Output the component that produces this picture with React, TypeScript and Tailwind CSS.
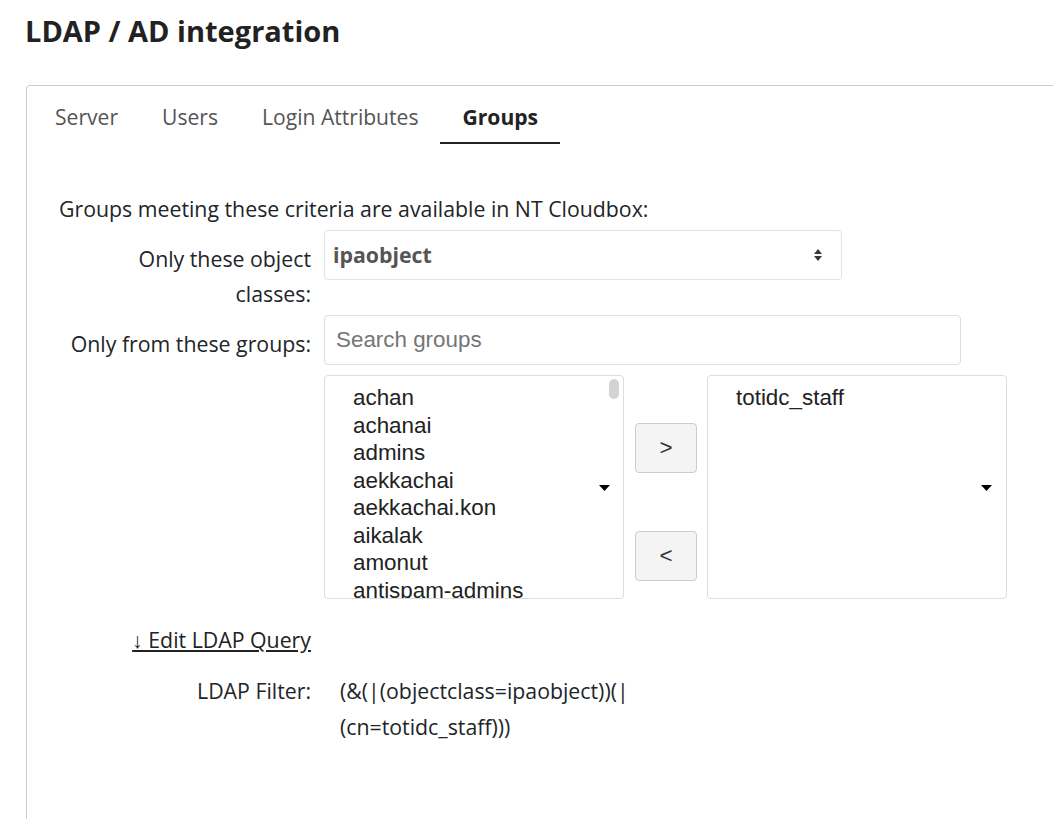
import React from 'react';

const groups = [
  'achan',
  'achanai',
  'admins',
  'aekkachai',
  'aekkachai.kon',
  'aikalak',
  'amonut',
  'antispam-admins',
];

const tabs = ['Server', 'Users', 'Login Attributes', 'Groups'];

const Triangle = () => (
  <svg width="11" height="6" viewBox="0 0 11 6" className="absolute top-[109px]">
    <polygon points="0,0 11,0 5.5,6" fill="#000" />
  </svg>
);

const App = () => {
  return (
    <div className="w-[1053px] h-[819px] overflow-hidden bg-white font-['Open_Sans',sans-serif] text-[#212529]">
      <h1 className="pl-[25px] pt-[13px] text-[29px] font-bold leading-[35px] text-[#222]">
        LDAP / AD integration
      </h1>

      <div className="mt-[37px] ml-[26px] w-[1100px] h-[760px] border border-[#ccc] rounded-[4px] pt-[6px]">
        {/* Tabs */}
        <div className="flex pl-[6px]">
          {tabs.map(tab => (
            <div
              key={tab}
              className={
                tab === 'Groups'
                  ? 'px-[22px] py-[8px] leading-[34px] text-[21.1px] font-bold text-[#222] border-b-2 border-[#222]'
                  : 'px-[22px] py-[8px] leading-[34px] text-[21.1px] text-[#555] border-b-2 border-transparent'
              }
            >
              {tab}
            </div>
          ))}
        </div>

        <div className="pl-[32px] text-[21.3px]">
          <p className="mt-[47px] leading-[36px]">Groups meeting these criteria are available in NT Cloudbox:</p>

          {/* Object classes */}
          <div className="flex items-start mt-[3px]">
            <div className="w-[252px] text-right pt-[11px] leading-[35px]">
              Only these object
              <br />
              classes:
            </div>
            <div className="ml-[13px] w-[518px] h-[50px] border border-[#e3e3e3] rounded-[4px] flex items-center justify-between pl-[8px] pr-[19px]">
              <span className="font-bold text-[#555]">ipaobject</span>
              <svg width="8" height="12" viewBox="0 0 8 12">
                <polygon points="0,5 4,0 8,5" fill="#343a40" />
                <polygon points="0,7 8,7 4,12" fill="#343a40" />
              </svg>
            </div>
          </div>

          {/* Search */}
          <div className="flex items-start mt-[4px]">
            <div className="w-[252px] text-right pt-[11px] leading-[35px]">Only from these groups:</div>
            <div className="ml-[13px] w-[637px] h-[50px] border border-[#ddd] rounded-[4px] flex items-center pl-[11px] font-['Liberation_Sans',Arial,sans-serif] text-[22.4px] text-[#757575]">
              Search groups
            </div>
          </div>

          {/* Dual list */}
          <div className="flex mt-[10px] font-['Liberation_Sans',Arial,sans-serif] text-[22.4px] text-[#222]">
            <div className="w-[265px]" />
            <div className="relative w-[300px] h-[224px] border border-[#ddd] rounded-[4px] overflow-hidden pt-[8px] pl-[28px]">
              {groups.map(g => (
                <div key={g} className="leading-[27.5px]">{g}</div>
              ))}
              <div className="absolute right-[4px] top-[3px] w-[10px] h-[20px] rounded-full bg-[#d3d3d3]" />
              <div className="absolute right-[24px] top-0">
                <Triangle />
              </div>
            </div>
            <div className="ml-[11px] w-[62px] flex flex-col pt-[48px] gap-[58px]">
              <button className="h-[50px] border border-[#ccc] rounded-[4px] bg-[#f4f4f4] text-[#333]">&gt;</button>
              <button className="h-[50px] border border-[#ccc] rounded-[4px] bg-[#f4f4f4] text-[#333]">&lt;</button>
            </div>
            <div className="relative ml-[10px] w-[300px] h-[224px] border border-[#ddd] rounded-[4px] overflow-hidden pt-[8px] pl-[28px]">
              <div className="leading-[27.5px]">totidc_staff</div>
              <div className="absolute right-[25px] top-0">
                <Triangle />
              </div>
            </div>
          </div>

          {/* Edit query */}
          <div className="mt-[23px] w-[252px] text-right leading-[36px]">
            <a href="#" className="underline text-[#222]">↓ Edit LDAP Query</a>
          </div>

          {/* Filter */}
          <div className="flex mt-[15px] leading-[36px]">
            <div className="w-[252px] text-right">LDAP Filter:</div>
            <div className="ml-[29px]">
              (&amp;(|(objectclass=ipaobject))(|
              <br />
              (cn=totidc_staff)))
            </div>
          </div>
        </div>
      </div>
    </div>
  );
};

export default App;
